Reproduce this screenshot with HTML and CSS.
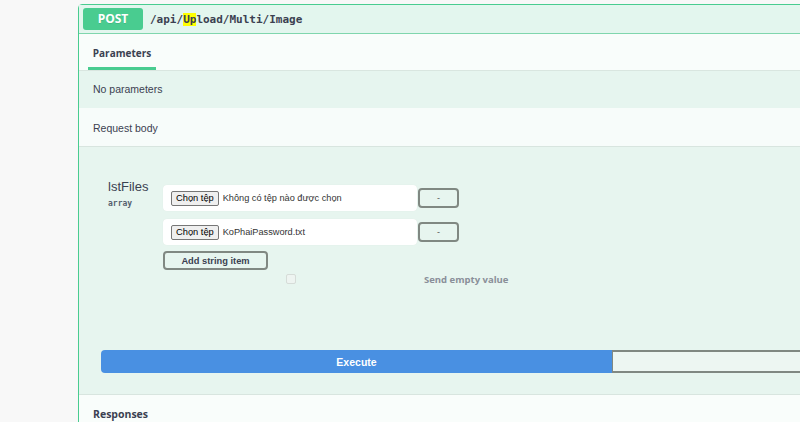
FILE: index.html
```html
<!DOCTYPE html>
<html>
<head>
<meta charset="utf-8">
<link rel="stylesheet" href="styles.css">
</head>
<body>
<div class="page">
  <div class="opblock">
    <div class="summary">
      <span class="method">POST</span>
      <span class="path">/api/<mark>Up</mark>load/Multi/Image</span>
    </div>
    <div class="tabs">
      <div class="tab">Parameters</div>
    </div>
    <div class="section green">No parameters</div>
    <div class="section light">Request body</div>
    <div class="body">
      <div class="param">
        <div class="pname">
          <div class="pn">lstFiles</div>
          <div class="ptype">array</div>
        </div>
        <div class="pvalue">
          <div class="item">
            <div class="file"><span class="choose">Chọn tệp</span><span class="fname">Không có tệp nào được chọn</span></div>
            <button class="minus">-</button>
          </div>
          <div class="item">
            <div class="file"><span class="choose">Chọn tệp</span><span class="fname">KoPhaiPassword.txt</span></div>
            <button class="minus">-</button>
          </div>
          <button class="add">Add string item</button>
          <div class="empty">
            <span class="check"></span>
            <span class="empty-label">Send empty value</span>
          </div>
        </div>
      </div>
      <div class="actions">
        <button class="execute">Execute</button>
        <button class="clear"></button>
      </div>
    </div>
    <div class="responses">Responses</div>
  </div>
</div>
</body>
</html>
```

FILE: styles.css
```css
html, body {
  margin: 0;
  padding: 0;
  background: #f8f8f8;
  overflow: hidden;
  height: 422px;
}
.page {
  padding: 4px 0 0 78px;
  width: 722px;
  overflow: hidden;
}
.opblock {
  width: 900px;
  border: 1px solid #49cc90;
  border-radius: 4px;
  background: #e7f5ef;
  font-family: "Liberation Sans", Arial, sans-serif;
  color: #3b4151;
}
.summary {
  display: flex;
  align-items: center;
  padding: 3px 4px;
  height: 22px;
  border-bottom: 1px solid #7fd6ad;
  background: #e3f6ee;
}
.method {
  width: 60px;
  height: 22px;
  line-height: 22px;
  background: #49cc90;
  border-radius: 3px;
  color: #fff;
  font-family: "Open Sans", sans-serif;
  font-weight: 700;
  font-size: 12px;
  text-align: center;
  text-shadow: 0 1px 0 rgba(0,0,0,.1);
}
.path {
  margin-left: 7px;
  font-family: "DejaVu Sans Mono", monospace;
  font-weight: 700;
  font-size: 11px;
  color: #3b4151;
}
.path mark {
  background: #ffff00;
  color: #3b4151;
}
.tabs {
  height: 36px;
  background: #f9fdfb;
  padding-left: 9px;
  border-bottom: 1px solid #d9e6e0;
  display: flex;
}
.tab {
  font-family: "Open Sans", sans-serif;
  font-weight: 700;
  font-size: 10px;
  width: 68px;
  height: 29px;
  padding-top: 4px;
  border-bottom: 3px solid #49cc90;
  display: flex;
  align-items: center;
  justify-content: center;
}
.section {
  font-size: 10.5px;
  padding-left: 14px;
  display: flex;
  align-items: center;
}
.section.green {
  height: 37px;
  padding-bottom: 2px;
  box-sizing: border-box;
  background: #e6f5ef;
}
.section.light {
  height: 39px;
  padding-top: 1px;
  box-sizing: border-box;
  background: #f7fcfa;
  border-bottom: 1px solid #d8e5df;
}
.body {
  height: 247px;
  background: #e7f5ef;
  padding: 0 0 0 22px;
  box-sizing: border-box;
}
.param {
  display: flex;
  padding-top: 32px;
  padding-left: 7px;
}
.pname {
  width: 55px;
}
.pn {
  font-size: 13px;
  line-height: 16px;
  color: #3b4151;
}
.ptype {
  font-family: "DejaVu Sans Mono", monospace;
  font-size: 8px;
  font-weight: 700;
  color: #55606e;
  margin-top: 4px;
}
.pvalue {
  display: flex;
  flex-direction: column;
  align-items: flex-start;
  padding-top: 6px;
}
.item {
  display: flex;
  align-items: center;
  margin-bottom: 8px;
}
.file {
  width: 254px;
  height: 26px;
  background: #fff;
  border-radius: 4px;
  display: flex;
  align-items: center;
  padding-left: 8px;
  box-sizing: border-box;
  box-shadow: 0 0 1px rgba(0,0,0,.08);
}
.choose {
  font-size: 9.3px;
  background: #efefef;
  border: 1px solid #767676;
  border-radius: 2px;
  padding: 0 4px;
  height: 13px;
  line-height: 13px;
  color: #000;
}
.fname {
  font-size: 9.2px;
  margin-left: 4px;
  color: #333;
}
.minus {
  width: 41px;
  height: 20px;
  margin-left: 1px;
  border: 2px solid #808882;
  border-radius: 4px;
  background: transparent;
  font-size: 9px;
  color: #555;
  padding: 0;
  font-family: "Liberation Sans", Arial, sans-serif;
}
.add {
  width: 105px;
  height: 19px;
  margin-top: -2px;
  border: 2px solid #808882;
  border-radius: 4px;
  background: transparent;
  font-family: "Liberation Sans", Arial, sans-serif;
  font-weight: 700;
  font-size: 9.3px;
  color: #3b4151;
  padding: 0;
}
.empty {
  display: flex;
  align-items: center;
  margin-top: 2px;
  height: 14px;
}
.check {
  width: 8px;
  height: 8px;
  border: 1px solid #d6dcd8;
  border-radius: 2px;
  margin-left: 123px;
  background: #eef4f1;
}
.empty-label {
  margin-left: 128px;
  font-family: "Open Sans", sans-serif;
  font-weight: 700;
  font-size: 9.5px;
  color: #8a8f99;
  margin-top: 1px;
}
.actions {
  display: flex;
  margin-top: 64px;
}
.execute {
  width: 511px;
  height: 23px;
  background: #4990e2;
  border: none;
  border-radius: 4px 0 0 4px;
  color: #fff;
  font-family: "Liberation Sans", Arial, sans-serif;
  font-weight: 700;
  font-size: 10.5px;
  padding: 0;
}
.clear {
  width: 300px;
  height: 23px;
  background: #edf6f2;
  border: 2px solid #808882;
  border-left: 1px solid #808882;
  border-right: none;
  padding: 0;
}
.responses {
  height: 40px;
  background: #f9fdfb;
  border-top: 1px solid #d8e5df;
  font-family: "Open Sans", sans-serif;
  font-weight: 700;
  font-size: 10.5px;
  padding-left: 14px;
  padding-top: 12px;
  box-sizing: border-box;
}
```
